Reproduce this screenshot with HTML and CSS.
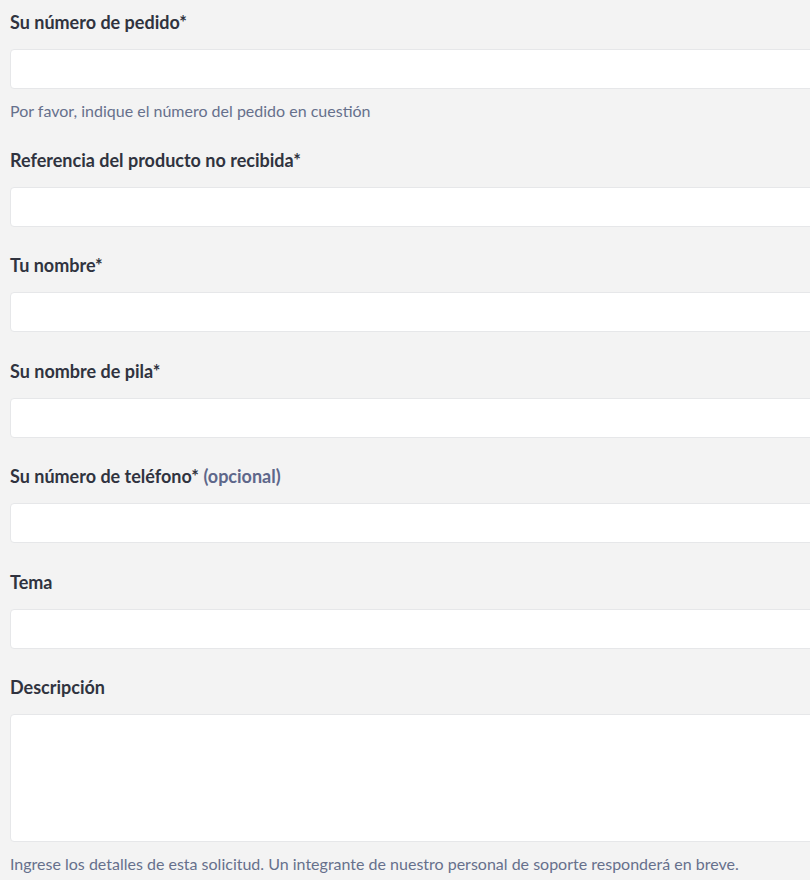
FILE: index.html
```html
<!DOCTYPE html>
<html>

<head>
    <meta charset="UTF-8">
    <title>Enviar una solicitud</title>
    <link rel="stylesheet" href="styles.css">
</head>

<body>
    <form id="request-form">
        <div class="field">
            <label for="order">Su número de pedido*</label>
            <input type="text" id="order" name="order">
            <p class="hint">Por favor, indique el número del pedido en cuestión</p>
        </div>
        <div class="field">
            <label for="product">Referencia del producto no recibida*</label>
            <input type="text" id="product" name="product">
        </div>
        <div class="field">
            <label for="last-name">Tu nombre*</label>
            <input type="text" id="last-name" name="last-name">
        </div>
        <div class="field">
            <label for="first-name">Su nombre de pila*</label>
            <input type="text" id="first-name" name="first-name">
        </div>
        <div class="field">
            <label for="phone">Su número de teléfono* <span class="optional">(opcional)</span></label>
            <input type="text" id="phone" name="phone">
        </div>
        <div class="field">
            <label for="subject">Tema</label>
            <input type="text" id="subject" name="subject">
        </div>
        <div class="field">
            <label for="description">Descripción</label>
            <textarea id="description" name="description"></textarea>
            <p class="hint">Ingrese los detalles de esta solicitud. Un integrante de nuestro personal de soporte responderá en breve.</p>
        </div>
    </form>
</body>

</html>
```

FILE: styles.css
```css
body {
    margin: 0;
    padding: 10px 0 0 10px;
    background: #f3f3f3;
    font-family: Lato, sans-serif;
    color: #30333f;
    overflow: hidden;
}

#request-form {
    width: 840px;
}

.field {
    margin-bottom: 26.5px;
}

label {
    display: block;
    font-size: 18px;
    font-weight: bold;
    line-height: 24px;
    margin-bottom: 15px;
}

.optional {
    color: #5e678a;
}

input,
textarea {
    display: block;
    box-sizing: border-box;
    width: 100%;
    height: 40px;
    margin: 0;
    padding: 8px 10px;
    border: 1px solid #e6e7e9;
    border-radius: 4px;
    background: #fff;
    font-family: inherit;
    font-size: 15px;
}

textarea {
    height: 128px;
    resize: none;
}

.hint {
    margin: 11px 0 0;
    font-size: 16px;
    line-height: 21px;
    color: #66708c;
}
```
